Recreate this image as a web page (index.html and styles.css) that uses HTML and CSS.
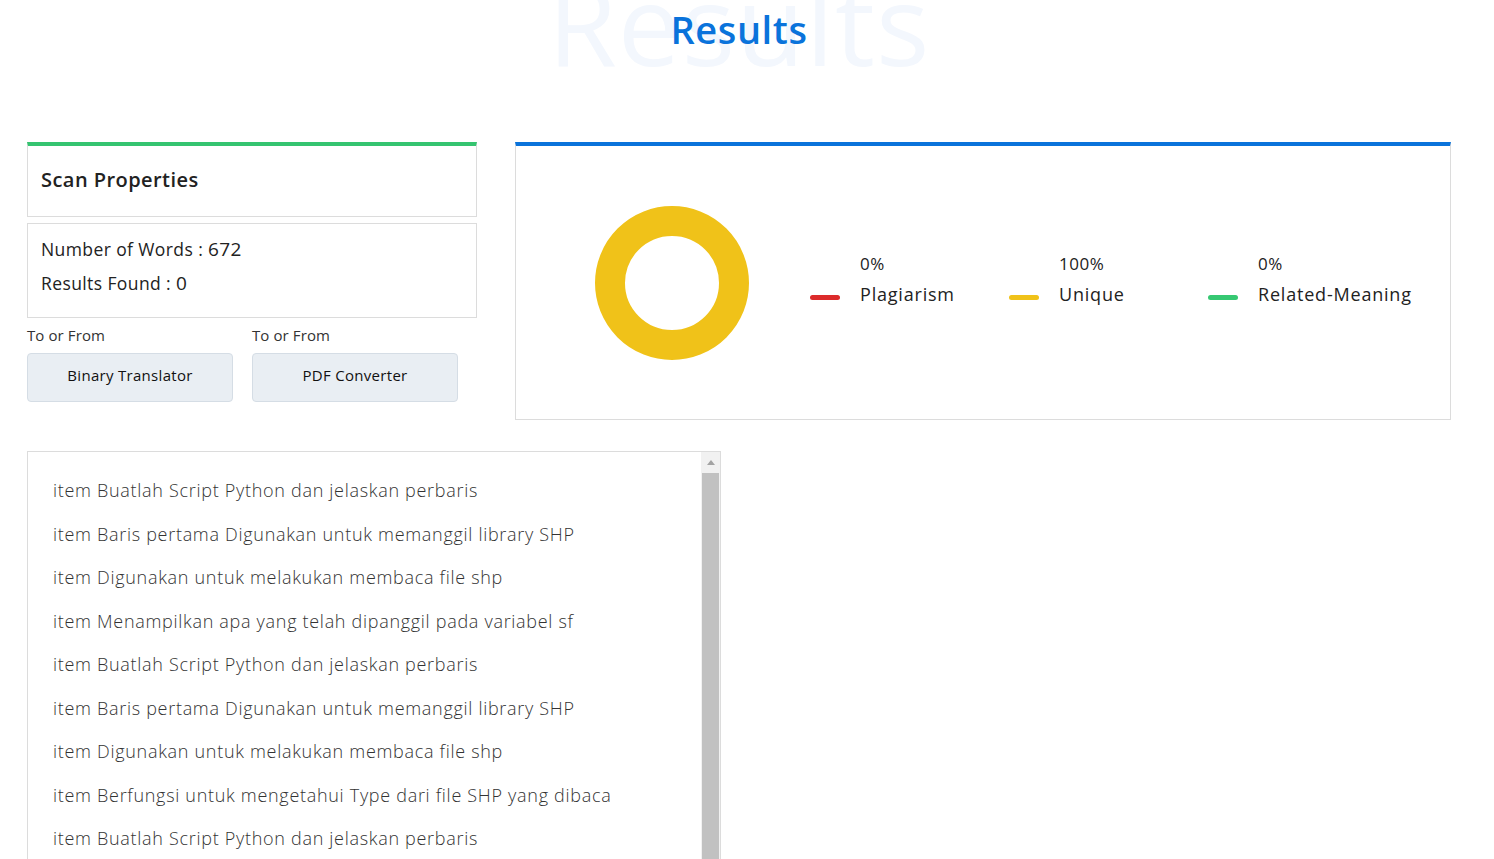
FILE: index.html
```html
<!DOCTYPE html>
<html lang="en">
<head>
<meta charset="utf-8">
<title>Results</title>
<link rel="stylesheet" href="styles.css">
</head>
<body>
<main class="page">
  <header class="heading">
    <span class="heading-bg" aria-hidden="true">Results</span>
    <h1 class="heading-title">Results</h1>
  </header>

  <section class="top-row">
    <div class="left-col">
      <div class="card card-green">
        <h2 class="card-title">Scan Properties</h2>
      </div>
      <div class="card card-stats">
        <p class="stat">Number of Words : <span class="stat-num">672</span></p>
        <p class="stat">Results Found : <span class="stat-num">0</span></p>
      </div>
      <div class="tools">
        <div class="tool">
          <span class="tool-label">To or From</span>
          <button class="tool-btn">Binary Translator</button>
        </div>
        <div class="tool">
          <span class="tool-label">To or From</span>
          <button class="tool-btn">PDF Converter</button>
        </div>
      </div>
    </div>

    <div class="card card-blue chart-card">
      <svg class="donut" width="154" height="154" viewBox="0 0 154 154">
        <circle cx="77" cy="77" r="62" fill="none" stroke="#f0c219" stroke-width="30"/>
      </svg>
      <ul class="legend">
        <li class="legend-item">
          <span class="swatch swatch-red"></span>
          <div class="legend-text"><span class="pct">0%</span><span class="lbl">Plagiarism</span></div>
        </li>
        <li class="legend-item">
          <span class="swatch swatch-yellow"></span>
          <div class="legend-text"><span class="pct">100%</span><span class="lbl">Unique</span></div>
        </li>
        <li class="legend-item">
          <span class="swatch swatch-green"></span>
          <div class="legend-text"><span class="pct">0%</span><span class="lbl">Related-Meaning</span></div>
        </li>
      </ul>
    </div>
  </section>

  <section class="list-box">
    <ul class="items">
      <li>item Buatlah Script Python dan jelaskan perbaris</li>
      <li>item Baris pertama Digunakan untuk memanggil library SHP</li>
      <li>item Digunakan untuk melakukan membaca file shp</li>
      <li>item Menampilkan apa yang telah dipanggil pada variabel sf</li>
      <li>item Buatlah Script Python dan jelaskan perbaris</li>
      <li>item Baris pertama Digunakan untuk memanggil library SHP</li>
      <li>item Digunakan untuk melakukan membaca file shp</li>
      <li>item Berfungsi untuk mengetahui Type dari file SHP yang dibaca</li>
      <li>item Buatlah Script Python dan jelaskan perbaris</li>
      <li>item Baris pertama Digunakan untuk memanggil library SHP</li>
    </ul>
    <div class="scrollbar">
      <span class="scroll-arrow"></span>
      <span class="scroll-thumb"></span>
    </div>
  </section>
</main>
</body>
</html>
```

FILE: styles.css
```css
html, body {
  margin: 0;
  padding: 0;
  overflow: hidden;
  background: #fff;
}
body {
  font-family: "Open Sans", "Noto Sans", sans-serif;
  color: #222;
  height: 859px;
}

.page {
  padding-left: 27px;
  width: 1424px;
}

.heading {
  position: relative;
  height: 142px;
  text-align: center;
}
.heading-bg {
  position: absolute;
  left: 0;
  right: 0;
  top: -44px;
  font-size: 112px;
  font-weight: 500;
  color: #f3f7fd;
  line-height: 1.2;
  letter-spacing: 1px;
}
.heading-title {
  position: relative;
  margin: 0;
  padding-top: 5px;
  font-size: 38px;
  font-weight: 600;
  line-height: 48px;
  letter-spacing: 0.6px;
  color: #0a73db;
}

.top-row {
  display: flex;
  gap: 38px;
  align-items: flex-start;
}

.left-col {
  width: 450px;
  display: flex;
  flex-direction: column;
}

.card {
  border: 1px solid #dcdcdc;
  box-sizing: border-box;
  background: #fff;
}
.card-green {
  border-top: 4px solid #35c470;
  height: 75px;
  display: flex;
  align-items: center;
  padding: 0 13px 3px;
}
.card-title {
  margin: 0;
  font-size: 20px;
  font-weight: 600;
  letter-spacing: 0.45px;
  color: #222;
}
.card-stats {
  margin-top: 6px;
  height: 95px;
  padding: 8px 13px 16px;
}
.stat {
  margin: 0;
  font-size: 17.5px;
  font-weight: 500;
  line-height: 34px;
  letter-spacing: 0.4px;
  color: #222;
}
.stat-num {
  font-size: 19px;
}

.tools {
  display: flex;
  margin-top: 7px;
}
.tool {
  width: 225px;
  display: flex;
  flex-direction: column;
}
.tool-label {
  font-size: 15px;
  line-height: 20px;
  letter-spacing: 0.1px;
  color: #333;
}
.tool-btn {
  margin-top: 8px;
  width: 206px;
  height: 49px;
  background: #e9eef3;
  border: 1px solid #d5dde5;
  border-radius: 4px;
  font-family: inherit;
  font-size: 15px;
  font-weight: 500;
  letter-spacing: 0.3px;
  color: #111;
  padding: 0 0 5px;
}

.card-blue {
  border-top: 4px solid #0a73db;
}
.chart-card {
  width: 937px;
  height: 278px;
  display: flex;
  align-items: center;
  padding-left: 79px;
}
.donut {
  display: block;
  flex: none;
}
.legend {
  list-style: none;
  margin: 0 0 7px 61px;
  padding: 0;
  display: flex;
}
.legend-item {
  width: 199px;
  display: flex;
  align-items: flex-end;
  gap: 20px;
  white-space: nowrap;
}
.swatch {
  width: 30px;
  height: 5px;
  border-radius: 3px;
  margin-bottom: 10px;
  flex: none;
}
.swatch-red { background: #dc2b2b; }
.swatch-yellow { background: #f0c219; }
.swatch-green { background: #36c872; }
.legend-text {
  display: flex;
  flex-direction: column;
}
.pct {
  font-size: 17px;
  font-weight: 500;
  line-height: 31px;
  letter-spacing: 0.5px;
  color: #222;
}
.lbl {
  font-size: 18px;
  font-weight: 500;
  line-height: 31px;
  letter-spacing: 0.8px;
  color: #222;
}

.list-box {
  margin-top: 31px;
  width: 694px;
  height: 460px;
  box-sizing: border-box;
  border: 1px solid #dcdcdc;
  display: flex;
}
.items {
  flex: 1;
  list-style: none;
  margin: 0;
  padding: 17px 0 0 25px;
}
.items li {
  font-size: 18px;
  font-weight: 300;
  line-height: 43.5px;
  letter-spacing: 0.7px;
  color: #333;
  white-space: nowrap;
}
.scrollbar {
  width: 19px;
  background: #f1f1f1;
  display: flex;
  flex-direction: column;
  align-items: center;
}
.scroll-arrow {
  margin-top: 8px;
  width: 0;
  height: 0;
  border-left: 4px solid transparent;
  border-right: 4px solid transparent;
  border-bottom: 5px solid #a3a3a3;
}
.scroll-thumb {
  margin-top: 8px;
  width: 17px;
  flex: 1;
  background: #c1c1c1;
}
```
